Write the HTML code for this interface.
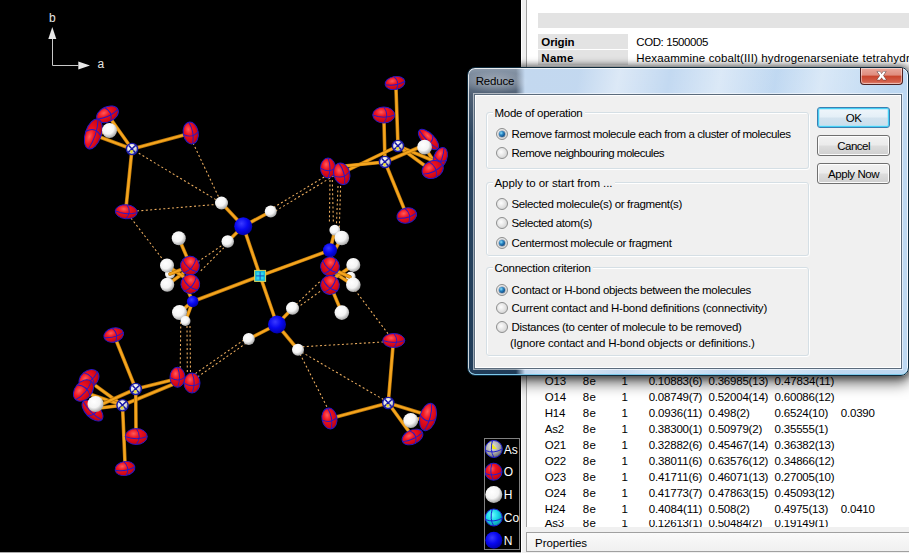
<!DOCTYPE html>
<html><head><meta charset="utf-8"><title>Reduce</title>
<style>
html,body{margin:0;padding:0}
body{width:909px;height:553px;overflow:hidden;position:relative;background:#fff;font-family:"Liberation Sans",sans-serif;font-size:12px;color:#000}
.a{position:absolute}
.t{position:absolute;white-space:nowrap;line-height:16px;font-size:11.5px}
.b{font-weight:bold}
#view{position:absolute;left:0;top:0;width:521px;height:552px;background:#000;overflow:hidden}
#vb{position:absolute;left:0;top:552px;width:521px;height:1px;background:#a8a8a8}
#div1{position:absolute;left:522px;top:0;width:4px;height:553px;background:#f0f0f0}
#div2{position:absolute;left:526px;top:0;width:1px;height:527px;background:#a0a0a0}
.cell{position:absolute;background:#e3e3e3}
#props{position:absolute;left:526px;top:532px;width:390px;height:20px;background:linear-gradient(#fafafa,#f0f0f0);border:1px solid #a0a0a0;box-sizing:border-box}
#pgap{position:absolute;left:526px;top:527px;width:383px;height:26px;background:#f0f0f0}
#legend{position:absolute;left:484px;top:438px;width:36px;height:112px;border:1px solid #808080;box-sizing:border-box;background:#000}
.lg{position:absolute;color:#fff;font-size:12px;line-height:16px;white-space:nowrap}
#dlg{position:absolute;left:467px;top:67px;width:442px;height:309px;box-sizing:border-box;border:1px solid #0e2a3c;border-radius:8px;
 background:radial-gradient(ellipse 34px 11px at 27px 14px,rgba(255,255,255,.38) 0,rgba(255,255,255,0) 100%),
 linear-gradient(100deg,rgba(255,255,255,0) 110px,rgba(255,255,255,.42) 150px,rgba(255,255,255,0) 200px,rgba(255,255,255,.42) 250px,rgba(255,255,255,0) 305px,rgba(255,255,255,.42) 350px,rgba(255,255,255,0) 420px),
 linear-gradient(to right,rgba(203,221,241,0) 0,rgba(203,221,241,0) 48px,#c3d8ef 57px,#c3d9f1 45%,#bdd8f2 100%),
 linear-gradient(to bottom,#8c9aab 0,#6a798c 14px,#4f5f73 27px,#2b4661 70px,#203c58 100%);
 box-shadow:inset 0 -1px 0 0 #7cc8ea,inset 0 0 0 1px rgba(255,255,255,.8),0 0 7px 2px rgba(0,0,0,.55),0 7px 14px 1px rgba(0,0,0,.5)}
#cli{position:absolute;left:474px;top:94px;width:428px;height:275px;box-sizing:border-box;border:1px solid #5b6b7c;background:#f0f0f0;box-shadow:inset 0 0 0 1px #fff, 0 0 0 1px rgba(255,255,255,.55)}
.gb{position:absolute;box-sizing:border-box;border:1px solid #d5dfe5;border-radius:3px}
.gw{position:absolute;box-sizing:border-box;border:1px solid #fff;border-radius:3px}
.gl{background:#f0f0f0;padding:0 2px;margin-left:-2px}
.btn{position:absolute;box-sizing:border-box;width:73px;height:21px;border:1px solid #707070;border-radius:3px;background:linear-gradient(#f2f2f2 0,#ebebeb 48%,#dddddd 52%,#cfcfcf 100%);box-shadow:inset 0 0 0 1px rgba(255,255,255,.9)}
.btn.def{border-color:#3c7fb1;box-shadow:inset 0 0 0 1px #46d0f6,inset 0 0 0 2px rgba(160,228,250,.55);background:linear-gradient(#eff6fb 0,#e4eff7 48%,#d3e3ef 52%,#c9deec 100%)}
.rd{position:absolute;width:12px;height:12px;box-sizing:border-box;border:1px solid #8e8f8f;border-radius:50%;background:radial-gradient(circle at 40% 40%,#fdfdfd 0,#e6e6e6 45%,#c8c8c8 100%)}
.rd.on::after{content:"";position:absolute;left:2px;top:2px;width:6px;height:6px;border-radius:50%;background:radial-gradient(circle at 36% 34%,#8fe0fa 0,#2a86c4 35%,#11508a 70%,#0b2a50 100%);box-shadow:0 0 0 .5px rgba(20,50,90,.55)}
#cls{position:absolute;left:860px;top:68px;width:43px;height:17px;box-sizing:border-box;border:1px solid #4d2020;border-top:none;border-radius:0 0 4px 4px;
 background:linear-gradient(#e9a99d 0,#df8c7d 45%,#c8432b 50%,#d3604b 85%,#e0897a 100%);box-shadow:inset 0 0 0 1px rgba(255,255,255,.45)}
</style></head><body>

<div id="view"><svg width="521" height="551" viewBox="0 0 521 551" style="position:absolute;left:0;top:0">
<defs>
<radialGradient id="gO" cx="38%" cy="32%" r="75%"><stop offset="0" stop-color="#ff5a5a"/><stop offset=".35" stop-color="#ee1220"/><stop offset="1" stop-color="#b80010"/></radialGradient>
<radialGradient id="gH" cx="40%" cy="35%" r="70%"><stop offset="0" stop-color="#ffffff"/><stop offset=".55" stop-color="#f4f4f4"/><stop offset="1" stop-color="#9a9a9a"/></radialGradient>
<radialGradient id="gN" cx="40%" cy="35%" r="70%"><stop offset="0" stop-color="#3a3aff"/><stop offset=".5" stop-color="#0808f0"/><stop offset="1" stop-color="#0000a0"/></radialGradient>
<radialGradient id="gAs" cx="40%" cy="35%" r="70%"><stop offset="0" stop-color="#ffffff"/><stop offset=".6" stop-color="#d8d8d8"/><stop offset="1" stop-color="#8a8a8a"/></radialGradient>
<radialGradient id="gCo" cx="40%" cy="35%" r="70%"><stop offset="0" stop-color="#70ffff"/><stop offset=".5" stop-color="#18d8e8"/><stop offset="1" stop-color="#0890a0"/></radialGradient>
<radialGradient id="gAsL" cx="40%" cy="35%" r="70%"><stop offset="0" stop-color="#e8e8e8"/><stop offset=".6" stop-color="#a8a8a8"/><stop offset="1" stop-color="#606060"/></radialGradient>
</defs>
<g fill="#e8e8e8" stroke="none"><path d="M52.3 27L48.3 39H56.3Z"/><path d="M90 65.6L78.3 61.6V69.6Z"/></g><path d="M52.5 39V65.5H78.5" fill="none" stroke="#c8c8c8" stroke-width="1"/>
<g stroke="#f0b060" stroke-width="1.05" stroke-dasharray="2 2.4" fill="none">
<line x1="135" y1="151" x2="221.5" y2="203"/>
<line x1="193" y1="143" x2="221.5" y2="203"/>
<line x1="137" y1="211" x2="221.5" y2="204"/>
<line x1="131" y1="218" x2="167" y2="265"/>
<line x1="298" y1="350" x2="386" y2="401"/>
<line x1="298" y1="350" x2="328" y2="409"/>
<line x1="298" y1="347" x2="383" y2="342"/>
<line x1="355" y1="290" x2="389" y2="335"/>
<line x1="197.8" y1="261.9" x2="222.7" y2="244.9"/>
<line x1="200.8" y1="270.8" x2="223.7" y2="247.9"/>
<line x1="271.78" y1="213.21" x2="334.03" y2="175.71"/>
<line x1="269.72" y1="209.79" x2="331.97" y2="172.29"/>
<line x1="330" y1="180" x2="329.4" y2="222"/>
<line x1="332.3" y1="180" x2="333.4" y2="224"/>
<line x1="338" y1="186" x2="336.4" y2="226"/>
<line x1="340.6" y1="186" x2="339.3" y2="228"/>
<line x1="296" y1="304.5" x2="321" y2="280.5"/>
<line x1="297" y1="308" x2="322" y2="290"/>
<line x1="247.61" y1="337.36" x2="192.86" y2="375.36"/>
<line x1="249.89" y1="340.64" x2="195.14" y2="378.64"/>
<line x1="180.8" y1="322" x2="180.2" y2="368"/>
<line x1="187" y1="326" x2="187.3" y2="372"/>
<line x1="190" y1="326" x2="190.5" y2="373"/>
</g>
<circle cx="170" cy="274" r="5" fill="url(#gH)"/>
<circle cx="350.6" cy="276.8" r="5" fill="url(#gH)"/>
<g stroke-linecap="round">
<line x1="132" y1="149" x2="110" y2="118" stroke="#b8760c" stroke-width="3.6"/><line x1="132" y1="149" x2="110" y2="118" stroke="#f5a51e" stroke-width="2.3"/>
<line x1="132" y1="149" x2="97" y2="136" stroke="#b8760c" stroke-width="3.6"/><line x1="132" y1="149" x2="97" y2="136" stroke="#f5a51e" stroke-width="2.3"/>
<line x1="132" y1="149" x2="184" y2="135" stroke="#b8760c" stroke-width="3.6"/><line x1="132" y1="149" x2="184" y2="135" stroke="#f5a51e" stroke-width="2.3"/>
<line x1="132" y1="149" x2="126" y2="208" stroke="#b8760c" stroke-width="3.6"/><line x1="132" y1="149" x2="126" y2="208" stroke="#f5a51e" stroke-width="2.3"/>
<line x1="109.5" y1="130.5" x2="99" y2="133.5" stroke="#b8760c" stroke-width="3.6"/><line x1="109.5" y1="130.5" x2="99" y2="133.5" stroke="#f5a51e" stroke-width="2.3"/>
<line x1="424.7" y1="147.2" x2="433" y2="160" stroke="#b8760c" stroke-width="3.6"/><line x1="424.7" y1="147.2" x2="433" y2="160" stroke="#f5a51e" stroke-width="2.3"/>
<line x1="398" y1="146" x2="396" y2="89" stroke="#b8760c" stroke-width="3.6"/><line x1="398" y1="146" x2="396" y2="89" stroke="#f5a51e" stroke-width="2.3"/>
<line x1="385" y1="162" x2="384" y2="122" stroke="#b8760c" stroke-width="3.6"/><line x1="385" y1="162" x2="384" y2="122" stroke="#f5a51e" stroke-width="2.3"/>
<line x1="398" y1="146" x2="346" y2="171" stroke="#b8760c" stroke-width="3.6"/><line x1="398" y1="146" x2="346" y2="171" stroke="#f5a51e" stroke-width="2.3"/>
<line x1="385" y1="162" x2="334" y2="167" stroke="#b8760c" stroke-width="3.6"/><line x1="385" y1="162" x2="334" y2="167" stroke="#f5a51e" stroke-width="2.3"/>
<line x1="398" y1="146" x2="434" y2="161" stroke="#b8760c" stroke-width="3.6"/><line x1="398" y1="146" x2="434" y2="161" stroke="#f5a51e" stroke-width="2.3"/>
<line x1="398" y1="146" x2="428" y2="168" stroke="#b8760c" stroke-width="3.6"/><line x1="398" y1="146" x2="428" y2="168" stroke="#f5a51e" stroke-width="2.3"/>
<line x1="385" y1="162" x2="420" y2="147" stroke="#b8760c" stroke-width="3.6"/><line x1="385" y1="162" x2="420" y2="147" stroke="#f5a51e" stroke-width="2.3"/>
<line x1="385" y1="162" x2="405" y2="211" stroke="#b8760c" stroke-width="3.6"/><line x1="385" y1="162" x2="405" y2="211" stroke="#f5a51e" stroke-width="2.3"/>
<line x1="135.75" y1="389" x2="116" y2="340" stroke="#b8760c" stroke-width="3.6"/><line x1="135.75" y1="389" x2="116" y2="340" stroke="#f5a51e" stroke-width="2.3"/>
<line x1="135.75" y1="389" x2="176" y2="379" stroke="#b8760c" stroke-width="3.6"/><line x1="135.75" y1="389" x2="176" y2="379" stroke="#f5a51e" stroke-width="2.3"/>
<line x1="122.5" y1="405.25" x2="181" y2="381" stroke="#b8760c" stroke-width="3.6"/><line x1="122.5" y1="405.25" x2="181" y2="381" stroke="#f5a51e" stroke-width="2.3"/>
<line x1="135.75" y1="389" x2="136" y2="432" stroke="#b8760c" stroke-width="3.6"/><line x1="135.75" y1="389" x2="136" y2="432" stroke="#f5a51e" stroke-width="2.3"/>
<line x1="122.5" y1="405.25" x2="125" y2="463" stroke="#b8760c" stroke-width="3.6"/><line x1="122.5" y1="405.25" x2="125" y2="463" stroke="#f5a51e" stroke-width="2.3"/>
<line x1="122.5" y1="405.25" x2="96" y2="386" stroke="#b8760c" stroke-width="3.6"/><line x1="122.5" y1="405.25" x2="96" y2="386" stroke="#f5a51e" stroke-width="2.3"/>
<line x1="122.5" y1="405.25" x2="88" y2="393.5" stroke="#b8760c" stroke-width="3.6"/><line x1="122.5" y1="405.25" x2="88" y2="393.5" stroke="#f5a51e" stroke-width="2.3"/>
<line x1="122.5" y1="405.25" x2="100" y2="408" stroke="#b8760c" stroke-width="3.6"/><line x1="122.5" y1="405.25" x2="100" y2="408" stroke="#f5a51e" stroke-width="2.3"/>
<line x1="135.75" y1="389" x2="100" y2="405" stroke="#b8760c" stroke-width="3.6"/><line x1="135.75" y1="389" x2="100" y2="405" stroke="#f5a51e" stroke-width="2.3"/>
<line x1="388.25" y1="403" x2="393" y2="346" stroke="#b8760c" stroke-width="3.6"/><line x1="388.25" y1="403" x2="393" y2="346" stroke="#f5a51e" stroke-width="2.3"/>
<line x1="388.25" y1="403" x2="336" y2="417" stroke="#b8760c" stroke-width="3.6"/><line x1="388.25" y1="403" x2="336" y2="417" stroke="#f5a51e" stroke-width="2.3"/>
<line x1="388.25" y1="403" x2="424" y2="414" stroke="#b8760c" stroke-width="3.6"/><line x1="388.25" y1="403" x2="424" y2="414" stroke="#f5a51e" stroke-width="2.3"/>
<line x1="388.25" y1="403" x2="410" y2="433" stroke="#b8760c" stroke-width="3.6"/><line x1="388.25" y1="403" x2="410" y2="433" stroke="#f5a51e" stroke-width="2.3"/>
<line x1="410.75" y1="420.5" x2="425" y2="417.5" stroke="#b8760c" stroke-width="3.6"/><line x1="410.75" y1="420.5" x2="425" y2="417.5" stroke="#f5a51e" stroke-width="2.3"/>
<line x1="260.1" y1="275.9" x2="243.25" y2="226.25" stroke="#b8760c" stroke-width="3.6"/><line x1="260.1" y1="275.9" x2="243.25" y2="226.25" stroke="#f5a51e" stroke-width="2.3"/>
<line x1="260.1" y1="275.9" x2="277" y2="324.5" stroke="#b8760c" stroke-width="3.6"/><line x1="260.1" y1="275.9" x2="277" y2="324.5" stroke="#f5a51e" stroke-width="2.3"/>
<line x1="260.1" y1="275.9" x2="192.7" y2="301.5" stroke="#b8760c" stroke-width="3.6"/><line x1="260.1" y1="275.9" x2="192.7" y2="301.5" stroke="#f5a51e" stroke-width="2.3"/>
<line x1="260.1" y1="275.9" x2="330" y2="250.25" stroke="#b8760c" stroke-width="3.6"/><line x1="260.1" y1="275.9" x2="330" y2="250.25" stroke="#f5a51e" stroke-width="2.3"/>
<line x1="243.25" y1="226.25" x2="221.5" y2="203" stroke="#b8760c" stroke-width="3.6"/><line x1="243.25" y1="226.25" x2="221.5" y2="203" stroke="#f5a51e" stroke-width="2.3"/>
<line x1="243.25" y1="226.25" x2="270.75" y2="211.5" stroke="#b8760c" stroke-width="3.6"/><line x1="243.25" y1="226.25" x2="270.75" y2="211.5" stroke="#f5a51e" stroke-width="2.3"/>
<line x1="243.25" y1="226.25" x2="227.75" y2="241.5" stroke="#b8760c" stroke-width="3.6"/><line x1="243.25" y1="226.25" x2="227.75" y2="241.5" stroke="#f5a51e" stroke-width="2.3"/>
<line x1="277" y1="324.5" x2="292.5" y2="308.25" stroke="#b8760c" stroke-width="3.6"/><line x1="277" y1="324.5" x2="292.5" y2="308.25" stroke="#f5a51e" stroke-width="2.3"/>
<line x1="277" y1="324.5" x2="248.75" y2="339" stroke="#b8760c" stroke-width="3.6"/><line x1="277" y1="324.5" x2="248.75" y2="339" stroke="#f5a51e" stroke-width="2.3"/>
<line x1="277" y1="324.5" x2="298" y2="349.75" stroke="#b8760c" stroke-width="3.6"/><line x1="277" y1="324.5" x2="298" y2="349.75" stroke="#f5a51e" stroke-width="2.3"/>
<line x1="190.5" y1="265.5" x2="178.75" y2="238.25" stroke="#b8760c" stroke-width="3.6"/><line x1="190.5" y1="265.5" x2="178.75" y2="238.25" stroke="#f5a51e" stroke-width="2.3"/>
<line x1="190.5" y1="268" x2="167.25" y2="284.75" stroke="#b8760c" stroke-width="3.6"/><line x1="190.5" y1="268" x2="167.25" y2="284.75" stroke="#f5a51e" stroke-width="2.3"/>
<line x1="191" y1="282" x2="167" y2="265.5" stroke="#b8760c" stroke-width="3.6"/><line x1="191" y1="282" x2="167" y2="265.5" stroke="#f5a51e" stroke-width="2.3"/>
<line x1="190.5" y1="266" x2="170" y2="274" stroke="#b8760c" stroke-width="3.6"/><line x1="190.5" y1="266" x2="170" y2="274" stroke="#f5a51e" stroke-width="2.3"/>
<line x1="192.7" y1="301.5" x2="179.5" y2="312.5" stroke="#b8760c" stroke-width="3.6"/><line x1="192.7" y1="301.5" x2="179.5" y2="312.5" stroke="#f5a51e" stroke-width="2.3"/>
<line x1="192.7" y1="301.5" x2="185.5" y2="321" stroke="#b8760c" stroke-width="3.6"/><line x1="192.7" y1="301.5" x2="185.5" y2="321" stroke="#f5a51e" stroke-width="2.3"/>
<line x1="192.7" y1="301.5" x2="186" y2="286" stroke="#b8760c" stroke-width="3.6"/><line x1="192.7" y1="301.5" x2="186" y2="286" stroke="#f5a51e" stroke-width="2.3"/>
<line x1="330" y1="258" x2="341.8" y2="238" stroke="#b8760c" stroke-width="3.6"/><line x1="330" y1="258" x2="341.8" y2="238" stroke="#f5a51e" stroke-width="2.3"/>
<line x1="330" y1="250.25" x2="335" y2="230.25" stroke="#b8760c" stroke-width="3.6"/><line x1="330" y1="250.25" x2="335" y2="230.25" stroke="#f5a51e" stroke-width="2.3"/>
<line x1="330" y1="270" x2="353" y2="285" stroke="#b8760c" stroke-width="3.6"/><line x1="330" y1="270" x2="353" y2="285" stroke="#f5a51e" stroke-width="2.3"/>
<line x1="330" y1="281" x2="353" y2="265.25" stroke="#b8760c" stroke-width="3.6"/><line x1="330" y1="281" x2="353" y2="265.25" stroke="#f5a51e" stroke-width="2.3"/>
<line x1="330" y1="268" x2="350" y2="277" stroke="#b8760c" stroke-width="3.6"/><line x1="330" y1="268" x2="350" y2="277" stroke="#f5a51e" stroke-width="2.3"/>
<line x1="331" y1="287" x2="341.8" y2="312.6" stroke="#b8760c" stroke-width="3.6"/><line x1="331" y1="287" x2="341.8" y2="312.6" stroke="#f5a51e" stroke-width="2.3"/>
</g>
<circle cx="243.25" cy="226.25" r="9" fill="url(#gN)"/>
<circle cx="277" cy="324.5" r="9" fill="url(#gN)"/>
<circle cx="192.7" cy="301.5" r="5.8" fill="url(#gN)"/>
<circle cx="330" cy="250.25" r="7" fill="url(#gN)"/>
<g transform="translate(107.5 114.3) rotate(-25)"><ellipse rx="11.5" ry="7.5" fill="url(#gO)" stroke="#2418c8" stroke-width="0.95"/><path d="M-11.5 0Q0 4.12 11.5 0M0 -7.5Q6.33 0 0 7.5" fill="none" stroke="#2418c8" stroke-width="0.95"/></g>
<g transform="translate(93.3 134) rotate(-72)"><ellipse rx="15.5" ry="8" fill="url(#gO)" stroke="#2418c8" stroke-width="0.95"/><path d="M-15.5 0Q0 4.4 15.5 0M0 -8Q8.53 0 0 8" fill="none" stroke="#2418c8" stroke-width="0.95"/></g>
<g transform="translate(190.75 133) rotate(-10)"><ellipse rx="7.5" ry="11" fill="url(#gO)" stroke="#2418c8" stroke-width="0.95"/><path d="M-7.5 0Q0 6.05 7.5 0M0 -11Q4.12 0 0 11" fill="none" stroke="#2418c8" stroke-width="0.95"/></g>
<g transform="translate(126.25 211.75) rotate(5)"><ellipse rx="11" ry="7" fill="url(#gO)" stroke="#2418c8" stroke-width="0.95"/><path d="M-11 0Q0 3.85 11 0M0 -7Q6.05 0 0 7" fill="none" stroke="#2418c8" stroke-width="0.95"/></g>
<g transform="translate(395 83) rotate(-10)"><ellipse rx="10" ry="6.5" fill="url(#gO)" stroke="#2418c8" stroke-width="0.95"/><path d="M-10 0Q0 3.58 10 0M0 -6.5Q5.5 0 0 6.5" fill="none" stroke="#2418c8" stroke-width="0.95"/></g>
<g transform="translate(383.75 115) rotate(0)"><ellipse rx="11" ry="8" fill="url(#gO)" stroke="#2418c8" stroke-width="0.95"/><path d="M-11 0Q0 4.4 11 0M0 -8Q6.05 0 0 8" fill="none" stroke="#2418c8" stroke-width="0.95"/></g>
<g transform="translate(428.5 139.5) rotate(45)"><ellipse rx="13" ry="6" fill="url(#gO)" stroke="#2418c8" stroke-width="0.95"/><path d="M-13 0Q0 3.3 13 0M0 -6Q7.15 0 0 6" fill="none" stroke="#2418c8" stroke-width="0.95"/></g>
<g transform="translate(440.3 158) rotate(20)"><ellipse rx="6.5" ry="11" fill="url(#gO)" stroke="#2418c8" stroke-width="0.95"/><path d="M-6.5 0Q0 6.05 6.5 0M0 -11Q3.58 0 0 11" fill="none" stroke="#2418c8" stroke-width="0.95"/></g>
<g transform="translate(432.7 169.5) rotate(-25)"><ellipse rx="11" ry="8.5" fill="url(#gO)" stroke="#2418c8" stroke-width="0.95"/><path d="M-11 0Q0 4.68 11 0M0 -8.5Q6.05 0 0 8.5" fill="none" stroke="#2418c8" stroke-width="0.95"/></g>
<g transform="translate(328 168) rotate(0)"><ellipse rx="7.5" ry="10" fill="url(#gO)" stroke="#2418c8" stroke-width="0.95"/><path d="M-7.5 0Q0 5.5 7.5 0M0 -10Q4.12 0 0 10" fill="none" stroke="#2418c8" stroke-width="0.95"/></g>
<g transform="translate(341.75 173.75) rotate(-15)"><ellipse rx="8" ry="11" fill="url(#gO)" stroke="#2418c8" stroke-width="0.95"/><path d="M-8 0Q0 6.05 8 0M0 -11Q4.4 0 0 11" fill="none" stroke="#2418c8" stroke-width="0.95"/></g>
<g transform="translate(406.75 215.5) rotate(-15)"><ellipse rx="10" ry="7.5" fill="url(#gO)" stroke="#2418c8" stroke-width="0.95"/><path d="M-10 0Q0 4.12 10 0M0 -7.5Q5.5 0 0 7.5" fill="none" stroke="#2418c8" stroke-width="0.95"/></g>
<g transform="translate(113.75 335) rotate(-15)"><ellipse rx="10" ry="7" fill="url(#gO)" stroke="#2418c8" stroke-width="0.95"/><path d="M-10 0Q0 3.85 10 0M0 -7Q5.5 0 0 7" fill="none" stroke="#2418c8" stroke-width="0.95"/></g>
<g transform="translate(177.5 377.25) rotate(0)"><ellipse rx="7.5" ry="10" fill="url(#gO)" stroke="#2418c8" stroke-width="0.95"/><path d="M-7.5 0Q0 5.5 7.5 0M0 -10Q4.12 0 0 10" fill="none" stroke="#2418c8" stroke-width="0.95"/></g>
<g transform="translate(192 383) rotate(0)"><ellipse rx="8" ry="10" fill="url(#gO)" stroke="#2418c8" stroke-width="0.95"/><path d="M-8 0Q0 5.5 8 0M0 -10Q4.4 0 0 10" fill="none" stroke="#2418c8" stroke-width="0.95"/></g>
<g transform="translate(89 379) rotate(-40)"><ellipse rx="11" ry="8.3" fill="url(#gO)" stroke="#2418c8" stroke-width="0.95"/><path d="M-11 0Q0 4.57 11 0M0 -8.3Q6.05 0 0 8.3" fill="none" stroke="#2418c8" stroke-width="0.95"/></g>
<g transform="translate(83.5 390.5) rotate(-50)"><ellipse rx="12" ry="8.5" fill="url(#gO)" stroke="#2418c8" stroke-width="0.95"/><path d="M-12 0Q0 4.68 12 0M0 -8.5Q6.6 0 0 8.5" fill="none" stroke="#2418c8" stroke-width="0.95"/></g>
<g transform="translate(92.5 410.6) rotate(45)"><ellipse rx="13" ry="7" fill="url(#gO)" stroke="#2418c8" stroke-width="0.95"/><path d="M-13 0Q0 3.85 13 0M0 -7Q7.15 0 0 7" fill="none" stroke="#2418c8" stroke-width="0.95"/></g>
<g transform="translate(136.25 436.5) rotate(0)"><ellipse rx="11" ry="8" fill="url(#gO)" stroke="#2418c8" stroke-width="0.95"/><path d="M-11 0Q0 4.4 11 0M0 -8Q6.05 0 0 8" fill="none" stroke="#2418c8" stroke-width="0.95"/></g>
<g transform="translate(125 468.5) rotate(-10)"><ellipse rx="10" ry="7" fill="url(#gO)" stroke="#2418c8" stroke-width="0.95"/><path d="M-10 0Q0 3.85 10 0M0 -7Q5.5 0 0 7" fill="none" stroke="#2418c8" stroke-width="0.95"/></g>
<g transform="translate(393.75 340.5) rotate(0)"><ellipse rx="11" ry="7" fill="url(#gO)" stroke="#2418c8" stroke-width="0.95"/><path d="M-11 0Q0 3.85 11 0M0 -7Q6.05 0 0 7" fill="none" stroke="#2418c8" stroke-width="0.95"/></g>
<g transform="translate(329.5 418.5) rotate(-10)"><ellipse rx="7.5" ry="10.5" fill="url(#gO)" stroke="#2418c8" stroke-width="0.95"/><path d="M-7.5 0Q0 5.78 7.5 0M0 -10.5Q4.12 0 0 10.5" fill="none" stroke="#2418c8" stroke-width="0.95"/></g>
<g transform="translate(428 417) rotate(15)"><ellipse rx="8" ry="14" fill="url(#gO)" stroke="#2418c8" stroke-width="0.95"/><path d="M-8 0Q0 7.7 8 0M0 -14Q4.4 0 0 14" fill="none" stroke="#2418c8" stroke-width="0.95"/></g>
<g transform="translate(412.5 437) rotate(-25)"><ellipse rx="11" ry="7" fill="url(#gO)" stroke="#2418c8" stroke-width="0.95"/><path d="M-11 0Q0 3.85 11 0M0 -7Q6.05 0 0 7" fill="none" stroke="#2418c8" stroke-width="0.95"/></g>
<g transform="translate(190 265.7) rotate(40)"><ellipse rx="9.4" ry="9.4" fill="url(#gO)" stroke="#2418c8" stroke-width="0.95"/><path d="M-9.4 0Q0 5.17 9.4 0M0 -9.4Q5.17 0 0 9.4" fill="none" stroke="#2418c8" stroke-width="0.95"/></g>
<g transform="translate(190.3 284) rotate(40)"><ellipse rx="9.4" ry="9.4" fill="url(#gO)" stroke="#2418c8" stroke-width="0.95"/><path d="M-9.4 0Q0 5.17 9.4 0M0 -9.4Q5.17 0 0 9.4" fill="none" stroke="#2418c8" stroke-width="0.95"/></g>
<g transform="translate(330 266.5) rotate(40)"><ellipse rx="9.4" ry="9.4" fill="url(#gO)" stroke="#2418c8" stroke-width="0.95"/><path d="M-9.4 0Q0 5.17 9.4 0M0 -9.4Q5.17 0 0 9.4" fill="none" stroke="#2418c8" stroke-width="0.95"/></g>
<g transform="translate(330 285) rotate(40)"><ellipse rx="9.4" ry="9.4" fill="url(#gO)" stroke="#2418c8" stroke-width="0.95"/><path d="M-9.4 0Q0 5.17 9.4 0M0 -9.4Q5.17 0 0 9.4" fill="none" stroke="#2418c8" stroke-width="0.95"/></g>
<g transform="translate(132 149)"><circle r="5.6" fill="url(#gAs)" stroke="#1818a8" stroke-width="1.4"/><path d="M-3.8 3.4L3.8 -3.8M-3.2 -3.6L3.4 3.8" stroke="#1818a8" stroke-width="1.5" fill="none"/><path d="M-2.4 1.6L1.6 1.2L-0.6 4.6Z" fill="#f0e020"/></g>
<g transform="translate(398 146)"><circle r="5.6" fill="url(#gAs)" stroke="#1818a8" stroke-width="1.4"/><path d="M-3.8 3.4L3.8 -3.8M-3.2 -3.6L3.4 3.8" stroke="#1818a8" stroke-width="1.5" fill="none"/><path d="M-2.4 1.6L1.6 1.2L-0.6 4.6Z" fill="#f0e020"/></g>
<g transform="translate(385 162)"><circle r="5.6" fill="url(#gAs)" stroke="#1818a8" stroke-width="1.4"/><path d="M-3.8 3.4L3.8 -3.8M-3.2 -3.6L3.4 3.8" stroke="#1818a8" stroke-width="1.5" fill="none"/><path d="M-2.4 1.6L1.6 1.2L-0.6 4.6Z" fill="#f0e020"/></g>
<g transform="translate(135.75 389)"><circle r="5.6" fill="url(#gAs)" stroke="#1818a8" stroke-width="1.4"/><path d="M-3.8 3.4L3.8 -3.8M-3.2 -3.6L3.4 3.8" stroke="#1818a8" stroke-width="1.5" fill="none"/><path d="M-2.4 1.6L1.6 1.2L-0.6 4.6Z" fill="#f0e020"/></g>
<g transform="translate(122.5 405.25)"><circle r="5.6" fill="url(#gAs)" stroke="#1818a8" stroke-width="1.4"/><path d="M-3.8 3.4L3.8 -3.8M-3.2 -3.6L3.4 3.8" stroke="#1818a8" stroke-width="1.5" fill="none"/><path d="M-2.4 1.6L1.6 1.2L-0.6 4.6Z" fill="#f0e020"/></g>
<g transform="translate(388.25 403)"><circle r="5.6" fill="url(#gAs)" stroke="#1818a8" stroke-width="1.4"/><path d="M-3.8 3.4L3.8 -3.8M-3.2 -3.6L3.4 3.8" stroke="#1818a8" stroke-width="1.5" fill="none"/><path d="M-2.4 1.6L1.6 1.2L-0.6 4.6Z" fill="#f0e020"/></g>
<g transform="translate(260.1 275.9)"><rect x="-5.5" y="-5.5" width="11" height="11" fill="#18b8d8" stroke="#d8d860" stroke-width="1"/><rect x="-3.5" y="-3.5" width="7" height="7" fill="#30d8f0"/><path d="M-4 0H4M0 -4V4" stroke="#1a50c0" stroke-width="1"/></g>
<circle cx="109.5" cy="130.5" r="7.5" fill="url(#gH)"/>
<circle cx="424.6" cy="147.1" r="7.4" fill="url(#gH)"/>
<circle cx="95.5" cy="404" r="8" fill="url(#gH)"/>
<circle cx="410.75" cy="420.5" r="7.5" fill="url(#gH)"/>
<circle cx="221.5" cy="203" r="6.5" fill="url(#gH)"/>
<circle cx="270.75" cy="211.5" r="6" fill="url(#gH)"/>
<circle cx="227.75" cy="241.5" r="6.25" fill="url(#gH)"/>
<circle cx="292.5" cy="308.25" r="6.5" fill="url(#gH)"/>
<circle cx="248.75" cy="339" r="6" fill="url(#gH)"/>
<circle cx="298" cy="349.75" r="6" fill="url(#gH)"/>
<circle cx="178.75" cy="238.25" r="7" fill="url(#gH)"/>
<circle cx="167" cy="265.5" r="7" fill="url(#gH)"/>
<circle cx="167.25" cy="284.75" r="7" fill="url(#gH)"/>
<circle cx="179.5" cy="312.5" r="7.5" fill="url(#gH)"/>
<circle cx="185.5" cy="321" r="5" fill="url(#gH)"/>
<circle cx="334.8" cy="230.1" r="5.4" fill="url(#gH)"/>
<circle cx="341.8" cy="238" r="7.3" fill="url(#gH)"/>
<circle cx="353.3" cy="264.9" r="7" fill="url(#gH)"/>
<circle cx="353.3" cy="284.8" r="7.3" fill="url(#gH)"/>
<circle cx="341.8" cy="312.6" r="7.3" fill="url(#gH)"/>
</svg>
<span class="lg" style="left:49px;top:9.5px;color:#e4e4e4">b</span><span class="lg" style="left:97.5px;top:55.8px;color:#e4e4e4">a</span>
</div><div id="vb"></div>
<div id="legend"><svg width="34" height="110" viewBox="485 439 34 110" style="position:absolute;left:0;top:0">
<g><circle cx="493.8" cy="449" r="8.5" fill="url(#gAsL)"/><path d="M490 441.5L492.5 449L497 449Z" fill="#f0e820"/><g fill="none" stroke="#2020d0" stroke-width="1"><circle cx="493.8" cy="449" r="8.5"/><path d="M485.5 450.5Q494 454 502 449M492.5 440.5Q489.5 450 494 457.5"/></g></g>
<g><circle cx="493.5" cy="471.7" r="8.5" fill="url(#gO)"/><g fill="none" stroke="#2020d0" stroke-width="1"><circle cx="493.5" cy="471.7" r="8.5"/><path d="M485 473.5Q494 477 502 472M492 463.3Q489 473 493.5 480.2"/></g></g>
<circle cx="493.8" cy="494.5" r="8.5" fill="url(#gH)"/>
<g><circle cx="493.8" cy="517.5" r="8.5" fill="url(#gCo)"/><g fill="none" stroke="#2020d0" stroke-width="1"><circle cx="493.8" cy="517.5" r="8.5"/><path d="M485.3 519.5Q494 523 502.3 518M492.3 509Q489.3 519 493.8 526"/></g></g>
<circle cx="493.8" cy="540.3" r="8.5" fill="url(#gN)"/>
</svg>
<span class="lg" style="left:18.80000000000001px;top:2.5px">As</span>
<span class="lg" style="left:18.80000000000001px;top:24.69999999999999px">O</span>
<span class="lg" style="left:18.80000000000001px;top:47.5px">H</span>
<span class="lg" style="left:18.80000000000001px;top:71.0px">Co</span>
<span class="lg" style="left:18.80000000000001px;top:93.89999999999998px">N</span>
</div>
<div id="div1"></div><div id="div2"></div>
<div class="cell" style="left:538px;top:13px;width:371px;height:15px"></div>
<div class="cell" style="left:538px;top:34px;width:90px;height:15px"></div>
<div class="cell" style="left:538px;top:50px;width:90px;height:15px"></div>
<span class="t b" id="t0" style="left:541.3px;top:34.02px;letter-spacing:-0.112px;">Origin</span>
<span class="t b" id="t1" style="left:541.3px;top:50.02px;letter-spacing:0.293px;">Name</span>
<span class="t" id="t2" style="left:636.3px;top:34.02px;letter-spacing:-0.418px;">COD: 1500005</span>
<span class="t" id="t3" style="left:636.3px;top:50.02px;letter-spacing:0.126px;">Hexaammine cobalt(III) hydrogenarseniate</span>
<span class="t" id="t4" style="left:862.6px;top:50.02px;letter-spacing:0.219px;">tetrahydrate</span>
<div class="a" style="left:527px;top:370px;width:382px;height:157px;overflow:hidden">
<span class="t" id="t5" style="left:17.7px;top:2.52px;letter-spacing:-0.083px;">O13</span>
<span class="t" id="t6" style="left:55.7px;top:2.52px;letter-spacing:0.402px;">8e</span>
<span class="t" id="t7" style="left:94.5px;top:2.52px;letter-spacing:-0.106px;">1</span>
<span class="t" id="t8" style="left:121.7px;top:2.52px;letter-spacing:-0.212px;">0.10883(6)</span>
<span class="t" id="t9" style="left:181.5px;top:2.52px;letter-spacing:-0.212px;">0.36985(13)</span>
<span class="t" id="t10" style="left:247.6px;top:2.52px;letter-spacing:-0.134px;">0.47834(11)</span>
<span class="t" id="t11" style="left:17.7px;top:18.52px;letter-spacing:-0.083px;">O14</span>
<span class="t" id="t12" style="left:55.7px;top:18.52px;letter-spacing:0.402px;">8e</span>
<span class="t" id="t13" style="left:94.5px;top:18.52px;letter-spacing:-0.106px;">1</span>
<span class="t" id="t14" style="left:121.7px;top:18.52px;letter-spacing:-0.212px;">0.08749(7)</span>
<span class="t" id="t15" style="left:181.5px;top:18.52px;letter-spacing:-0.212px;">0.52004(14)</span>
<span class="t" id="t16" style="left:247.6px;top:18.52px;letter-spacing:-0.212px;">0.60086(12)</span>
<span class="t" id="t17" style="left:17.7px;top:34.52px;letter-spacing:-0.170px;">H14</span>
<span class="t" id="t18" style="left:55.7px;top:34.52px;letter-spacing:0.402px;">8e</span>
<span class="t" id="t19" style="left:94.5px;top:34.52px;letter-spacing:-0.106px;">1</span>
<span class="t" id="t20" style="left:121.7px;top:34.52px;letter-spacing:-0.128px;">0.0936(11)</span>
<span class="t" id="t21" style="left:181.5px;top:34.52px;letter-spacing:-0.218px;">0.498(2)</span>
<span class="t" id="t22" style="left:247.6px;top:34.52px;letter-spacing:-0.212px;">0.6524(10)</span>
<span class="t" id="t23" style="left:313.8px;top:34.52px;letter-spacing:-0.215px;">0.0390</span>
<span class="t" id="t24" style="left:17.7px;top:50.52px;letter-spacing:-0.176px;">As2</span>
<span class="t" id="t25" style="left:55.7px;top:50.52px;letter-spacing:0.402px;">8e</span>
<span class="t" id="t26" style="left:94.5px;top:50.52px;letter-spacing:-0.106px;">1</span>
<span class="t" id="t27" style="left:121.7px;top:50.52px;letter-spacing:-0.212px;">0.38300(1)</span>
<span class="t" id="t28" style="left:181.5px;top:50.52px;letter-spacing:-0.212px;">0.50979(2)</span>
<span class="t" id="t29" style="left:247.6px;top:50.52px;letter-spacing:-0.212px;">0.35555(1)</span>
<span class="t" id="t30" style="left:17.7px;top:66.52px;letter-spacing:-0.083px;">O21</span>
<span class="t" id="t31" style="left:55.7px;top:66.52px;letter-spacing:0.402px;">8e</span>
<span class="t" id="t32" style="left:94.5px;top:66.52px;letter-spacing:-0.106px;">1</span>
<span class="t" id="t33" style="left:121.7px;top:66.52px;letter-spacing:-0.212px;">0.32882(6)</span>
<span class="t" id="t34" style="left:181.5px;top:66.52px;letter-spacing:-0.212px;">0.45467(14)</span>
<span class="t" id="t35" style="left:247.6px;top:66.52px;letter-spacing:-0.212px;">0.36382(13)</span>
<span class="t" id="t36" style="left:17.7px;top:82.52px;letter-spacing:-0.083px;">O22</span>
<span class="t" id="t37" style="left:55.7px;top:82.52px;letter-spacing:0.402px;">8e</span>
<span class="t" id="t38" style="left:94.5px;top:82.52px;letter-spacing:-0.106px;">1</span>
<span class="t" id="t39" style="left:121.7px;top:82.52px;letter-spacing:-0.128px;">0.38011(6)</span>
<span class="t" id="t40" style="left:181.5px;top:82.52px;letter-spacing:-0.212px;">0.63576(12)</span>
<span class="t" id="t41" style="left:247.6px;top:82.52px;letter-spacing:-0.212px;">0.34866(12)</span>
<span class="t" id="t42" style="left:17.7px;top:98.52px;letter-spacing:-0.083px;">O23</span>
<span class="t" id="t43" style="left:55.7px;top:98.52px;letter-spacing:0.402px;">8e</span>
<span class="t" id="t44" style="left:94.5px;top:98.52px;letter-spacing:-0.106px;">1</span>
<span class="t" id="t45" style="left:121.7px;top:98.52px;letter-spacing:-0.128px;">0.41711(6)</span>
<span class="t" id="t46" style="left:181.5px;top:98.52px;letter-spacing:-0.212px;">0.46071(13)</span>
<span class="t" id="t47" style="left:247.6px;top:98.52px;letter-spacing:-0.212px;">0.27005(10)</span>
<span class="t" id="t48" style="left:17.7px;top:114.52px;letter-spacing:-0.083px;">O24</span>
<span class="t" id="t49" style="left:55.7px;top:114.52px;letter-spacing:0.402px;">8e</span>
<span class="t" id="t50" style="left:94.5px;top:114.52px;letter-spacing:-0.106px;">1</span>
<span class="t" id="t51" style="left:121.7px;top:114.52px;letter-spacing:-0.212px;">0.41773(7)</span>
<span class="t" id="t52" style="left:181.5px;top:114.52px;letter-spacing:-0.212px;">0.47863(15)</span>
<span class="t" id="t53" style="left:247.6px;top:114.52px;letter-spacing:-0.212px;">0.45093(12)</span>
<span class="t" id="t54" style="left:17.7px;top:130.52px;letter-spacing:-0.170px;">H24</span>
<span class="t" id="t55" style="left:55.7px;top:130.52px;letter-spacing:0.402px;">8e</span>
<span class="t" id="t56" style="left:94.5px;top:130.52px;letter-spacing:-0.106px;">1</span>
<span class="t" id="t57" style="left:121.7px;top:130.52px;letter-spacing:-0.128px;">0.4084(11)</span>
<span class="t" id="t58" style="left:181.5px;top:130.52px;letter-spacing:-0.218px;">0.508(2)</span>
<span class="t" id="t59" style="left:247.6px;top:130.52px;letter-spacing:-0.212px;">0.4975(13)</span>
<span class="t" id="t60" style="left:313.8px;top:130.52px;letter-spacing:-0.215px;">0.0410</span>
<div class="a" style="left:0;top:150px;width:382px;height:7px;overflow:hidden"><div class="a" style="left:0;top:-150px">
<span class="t" id="t61" style="left:17.7px;top:144.92px;letter-spacing:-0.176px;">As3</span>
<span class="t" id="t62" style="left:55.7px;top:144.92px;letter-spacing:0.402px;">8e</span>
<span class="t" id="t63" style="left:94.5px;top:144.92px;letter-spacing:-0.106px;">1</span>
<span class="t" id="t64" style="left:121.7px;top:144.92px;letter-spacing:-0.212px;">0.12613(1)</span>
<span class="t" id="t65" style="left:181.5px;top:144.92px;letter-spacing:-0.212px;">0.50484(2)</span>
<span class="t" id="t66" style="left:247.6px;top:144.92px;letter-spacing:-0.212px;">0.19149(1)</span>
</div></div>
</div>
<div id="pgap"></div><div id="props"></div>
<span class="t" id="t67" style="left:535px;top:535.02px;letter-spacing:-0.042px;">Properties</span>
<div id="dlg"></div><div id="cls"><svg width="41" height="16" viewBox="0 0 41 16" style="position:absolute;left:0;top:0"><path d="M16.2 3.6H19L20.6 5.9L22.2 3.6H25L22.1 7.6L25.2 11.8H22.3L20.6 9.4L18.9 11.8H16L19.1 7.6Z" fill="#fff" stroke="#5a3a3a" stroke-width="1" stroke-linejoin="round" paint-order="stroke"/></svg></div>
<div id="cli"></div>
<span class="t" id="t68" style="left:475.7px;top:73.02px;letter-spacing:-0.173px;">Reduce</span>
<div class="gw" style="left:487px;top:113px;width:323px;height:57px"></div>
<div class="gb" style="left:486px;top:112px;width:323px;height:57px"></div>
<div class="gw" style="left:487px;top:183px;width:323px;height:74px"></div>
<div class="gb" style="left:486px;top:182px;width:323px;height:74px"></div>
<div class="gw" style="left:487px;top:268px;width:323px;height:89px"></div>
<div class="gb" style="left:486px;top:267px;width:323px;height:89px"></div>
<span class="t gl" id="t69" style="left:494.5px;top:105.02px;letter-spacing:-0.277px;">Mode of operation</span>
<span class="t gl" id="t70" style="left:494.5px;top:175.02px;letter-spacing:-0.058px;">Apply to or start from ...</span>
<span class="t gl" id="t71" style="left:494.5px;top:260.02px;letter-spacing:-0.314px;">Connection criterion</span>
<i class="rd on" style="left:495.8px;top:128px"></i>
<span class="t" id="t72" style="left:511.5px;top:126.02px;letter-spacing:-0.417px;">Remove farmost molecule each from a cluster of molecules</span>
<i class="rd" style="left:495.8px;top:147px"></i>
<span class="t" id="t73" style="left:511.5px;top:145.02px;letter-spacing:-0.517px;">Remove neighbouring molecules</span>
<i class="rd" style="left:495.8px;top:198px"></i>
<span class="t" id="t74" style="left:511.5px;top:196.02px;letter-spacing:-0.351px;">Selected molecule(s) or fragment(s)</span>
<i class="rd" style="left:495.8px;top:217px"></i>
<span class="t" id="t75" style="left:511.5px;top:215.22px;letter-spacing:-0.402px;">Selected atom(s)</span>
<i class="rd on" style="left:495.8px;top:237px"></i>
<span class="t" id="t76" style="left:511.5px;top:235.02px;letter-spacing:-0.344px;">Centermost molecule or fragment</span>
<i class="rd on" style="left:495.8px;top:284px"></i>
<span class="t" id="t77" style="left:511.5px;top:282.02px;letter-spacing:-0.317px;">Contact or H-bond objects between the molecules</span>
<i class="rd" style="left:495.8px;top:302px"></i>
<span class="t" id="t78" style="left:511.5px;top:300.02px;letter-spacing:-0.233px;">Current contact and H-bond definitions (connectivity)</span>
<i class="rd" style="left:495.8px;top:321px"></i>
<span class="t" id="t79" style="left:511.5px;top:319.02px;letter-spacing:-0.315px;">Distances (to center of molecule to be removed)</span>
<span class="t" id="t80" style="left:510px;top:335.32px;letter-spacing:-0.207px;">(Ignore contact and H-bond objects or definitions.)</span>
<div class="btn def" style="left:817px;top:107px"></div>
<span class="t" id="t81" style="left:845.7px;top:110.02px;letter-spacing:-0.412px;">OK</span>
<div class="btn" style="left:817px;top:135px"></div>
<span class="t" id="t82" style="left:837.2px;top:138.02px;letter-spacing:-0.502px;">Cancel</span>
<div class="btn" style="left:817px;top:163px"></div>
<span class="t" id="t83" style="left:828.1px;top:166.02px;letter-spacing:-0.441px;">Apply Now</span>
</body></html>
